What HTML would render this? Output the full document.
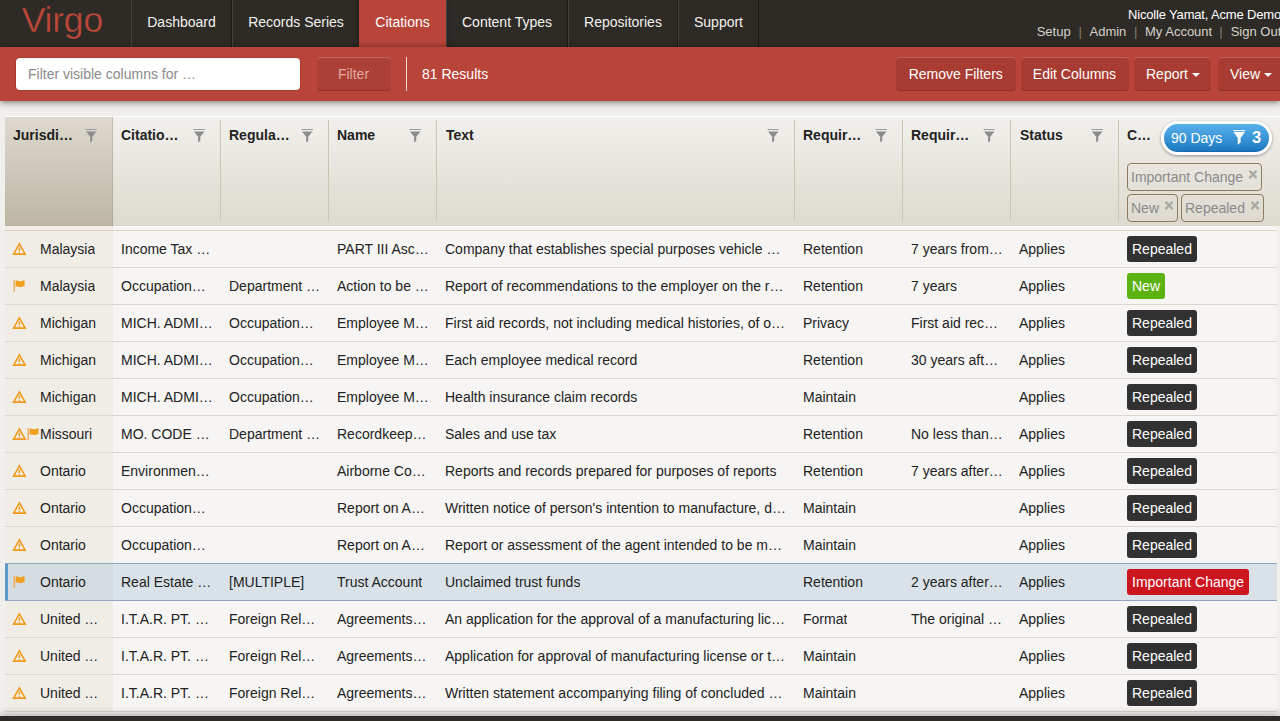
<!DOCTYPE html>
<html lang="en">
<head>
<meta charset="utf-8">
<title>Virgo - Citations</title>
<style>
*{box-sizing:border-box;margin:0;padding:0}
html,body{width:1280px;height:721px;overflow:hidden}
body{background:#f1efeb;font-family:"Liberation Sans",Arial,sans-serif;font-size:14px;color:#222;position:relative}
.abs{position:absolute}
/* top header */
#hdr{position:absolute;left:0;top:0;width:1280px;height:47px;background:#2e2b27}
#logo{position:absolute;left:21.7px;top:-3px;font-size:35.5px;line-height:46px;color:#bd4739;letter-spacing:-0.2px;-webkit-text-stroke:0.35px #2e2b27}
.nav{position:absolute;top:0;height:47px;line-height:44px;color:#f3f1ec;text-align:center;border-left:1px solid #45423d;border-right:1px solid #1c1a17;font-size:14px}
.nav.on{background:#b9453a;border-color:#b9453a;color:#fff;box-shadow:0 0 6px rgba(0,0,0,.35)}
#user{position:absolute;left:1128px;top:7px;white-space:nowrap;color:#fff;font-size:13px;line-height:15px;letter-spacing:-0.17px}
#links{position:absolute;left:0;top:24px;white-space:nowrap;color:#d6d2ca;font-size:13px;line-height:15px}
#links span,#links i{position:absolute;top:0}
#links i{font-style:normal;color:#857b68}
/* red bar */
#bar{position:absolute;left:0;top:47px;width:1280px;height:54px;background:#b9453a;box-shadow:0 1px 7px rgba(0,0,0,.55)}
#q{position:absolute;left:16px;top:11px;width:284px;height:32px;background:#fff;border-radius:4px;color:#8a8a8a;font-size:14px;line-height:32px;padding-left:12px;box-shadow:0 0 0 1px rgba(120,30,20,.25)}
.btn{position:absolute;top:10px;height:34px;line-height:34px;border-radius:4px;background:#a83c33;color:#fff;text-align:center;font-size:14px;box-shadow:inset 0 1px 0 rgba(255,255,255,.2),inset 0 -1px 0 rgba(0,0,0,.18)}
.btn.dis{color:#e0a9a2;background:#ad4036}
#vsep{position:absolute;left:406px;top:10px;width:1px;height:34px;background:#f0d9d5}
#res{position:absolute;left:422px;top:11px;line-height:32px;color:#fff}
.caret{display:inline-block;width:0;height:0;border-left:4px solid transparent;border-right:4px solid transparent;border-top:4px solid #fff;vertical-align:middle;margin-left:4px}
/* grid */
#grid{position:absolute;left:5px;top:116px;width:1272px;height:597px;background:#f6f5f3}
#gh{position:absolute;left:0;top:0;width:1275px;height:110px;border-top:1px solid #fff;background:linear-gradient(#f2f0ec,#dcd9cf)}
#gh .sorted{position:absolute;left:0;top:0;width:108px;height:109px;background:linear-gradient(#ddd9ce,#bdb6a5);border-right:1px solid rgba(140,130,110,.3)}
.th{position:absolute;top:9px;font-weight:bold;font-size:14px;line-height:18px;color:#222;white-space:nowrap}
.cs{position:absolute;top:3px;width:1px;height:101px;background:#cbc5b4}
.fi{position:absolute;top:12px;width:12.4px;height:14px}
#gap{position:absolute;left:0;top:110px;width:1272px;height:5px;border-bottom:1px solid #d9d4c8;background:#f6f5f3}
#gap b{position:absolute;left:0;top:0;width:108px;height:4px;background:#f0ede7}
#rows{position:absolute;left:0;top:115px;width:1272px}
.r{position:absolute;left:0;width:1272px;height:37px;border-bottom:1px solid #dcd8cf;background:#f6f5f3}
.r .c0{position:absolute;left:0;top:0;width:108px;height:36px;background:#f0ede7}
.r span{position:absolute;top:0;line-height:36px;white-space:nowrap;overflow:hidden;text-overflow:ellipsis;font-size:14px;color:#222}
.r.sel{background:#d9e2e8;border-bottom:1px solid #8ea5c4;box-shadow:0 -1px 0 #8ea5c4;z-index:2}
.r.sel .c0{background:#d5dcdf;border-left:3px solid #5b9bc8}
.tag{position:absolute;top:5px;height:26px;line-height:26px;border-radius:3px;color:#fff;padding:0 5px;font-size:14px;white-space:nowrap}
.rep{background:#313131}
.new{background:#5cb210}
.imp{background:#cd151f}
.ic{position:absolute;top:11px}
#pill{position:absolute;left:1156px;top:4px;width:111px;height:34px;border:3px solid #fff;border-radius:17px;background:linear-gradient(#58b0ea,#3e99da 45%,#1a76bd);color:#fff;font-size:14px;line-height:28px;box-shadow:0 1px 3px rgba(0,0,0,.4),inset 0 -1px 0 #1769aa}
#pill span{position:absolute;left:7px;top:0}
#pill b{position:absolute;left:88px;top:-1px;font-size:16.5px}
.chip{position:absolute;height:28px;border:1px solid #8b7d5b;border-radius:4px;color:#8a8a8a;font-size:14px;line-height:26px;padding-left:3px;white-space:nowrap}
.chip i{font-style:normal;font-weight:bold;position:absolute;right:3.5px;top:-2px;color:#a9a8a4;font-size:16px;-webkit-text-stroke:0.4px #a9a8a4}
#foot{position:absolute;left:0;top:716px;width:1280px;height:5px;background:#2e2b27;box-shadow:0 -1px 8px rgba(0,0,0,.4)}
</style>
</head>
<body>
<div id="hdr">
  <div id="logo">Virgo</div>
  <div class="nav" style="left:131px;width:101px">Dashboard</div>
  <div class="nav" style="left:232px;width:128px">Records Series</div>
  <div class="nav on" style="left:359.3px;width:86.5px">Citations</div>
  <div class="nav" style="left:446px;width:122px">Content Types</div>
  <div class="nav" style="left:568px;width:110px">Repositories</div>
  <div class="nav" style="left:678px;width:81px">Support</div>
  <div id="user">Nicolle Yamat, Acme Demo</div>
  <div id="links"><span style="left:1036.7px">Setup</span><i style="left:1078.4px">|</i><span style="left:1089.5px">Admin</span><i style="left:1134.1px">|</i><span style="left:1145px">My Account</span><i style="left:1219.3px">|</i><span style="left:1230.7px">Sign Out</span></div>
</div>
<div id="bar">
  <div id="q">Filter visible columns for …</div>
  <div class="btn dis" style="left:316.5px;width:74px">Filter</div>
  <div id="vsep"></div>
  <div id="res">81 Results</div>
  <div class="btn" style="left:896px;width:119.5px">Remove Filters</div>
  <div class="btn" style="left:1020.5px;width:108px">Edit Columns</div>
  <div class="btn" style="left:1133.5px;width:77px;padding-left:2px">Report<b class="caret"></b></div>
  <div class="btn" style="left:1217.5px;width:67px">View<b class="caret"></b></div>
</div>
<div id="grid">
  <div id="gh"><div class="sorted"></div><div class="th" style="left:8px">Jurisdi…</div><div class="th" style="left:116px">Citatio…</div><div class="th" style="left:224px">Regula…</div><div class="th" style="left:332px">Name</div><div class="th" style="left:441px">Text</div><div class="th" style="left:798px">Requir…</div><div class="th" style="left:906px">Requir…</div><div class="th" style="left:1015px">Status</div><div class="th" style="left:1122px">C…</div><div class="cs" style="left:215px"></div><div class="cs" style="left:323px"></div><div class="cs" style="left:431px"></div><div class="cs" style="left:789px"></div><div class="cs" style="left:897px"></div><div class="cs" style="left:1005px"></div><div class="cs" style="left:1113px"></div><svg class="fi" style="left:80px" viewBox="0 0 13 14" preserveAspectRatio="none"><path d="M0.5 0.5 H12.5" stroke="#9a9a9a" stroke-width="1" fill="none"/><path d="M1 2.5 H12 L7.6 7.8 V12 L5.4 13.5 V7.8 Z" fill="#8c8c8c"/></svg><svg class="fi" style="left:188px" viewBox="0 0 13 14" preserveAspectRatio="none"><path d="M0.5 0.5 H12.5" stroke="#9a9a9a" stroke-width="1" fill="none"/><path d="M1 2.5 H12 L7.6 7.8 V12 L5.4 13.5 V7.8 Z" fill="#8c8c8c"/></svg><svg class="fi" style="left:296px" viewBox="0 0 13 14" preserveAspectRatio="none"><path d="M0.5 0.5 H12.5" stroke="#9a9a9a" stroke-width="1" fill="none"/><path d="M1 2.5 H12 L7.6 7.8 V12 L5.4 13.5 V7.8 Z" fill="#8c8c8c"/></svg><svg class="fi" style="left:404px" viewBox="0 0 13 14" preserveAspectRatio="none"><path d="M0.5 0.5 H12.5" stroke="#9a9a9a" stroke-width="1" fill="none"/><path d="M1 2.5 H12 L7.6 7.8 V12 L5.4 13.5 V7.8 Z" fill="#8c8c8c"/></svg><svg class="fi" style="left:762px" viewBox="0 0 13 14" preserveAspectRatio="none"><path d="M0.5 0.5 H12.5" stroke="#9a9a9a" stroke-width="1" fill="none"/><path d="M1 2.5 H12 L7.6 7.8 V12 L5.4 13.5 V7.8 Z" fill="#8c8c8c"/></svg><svg class="fi" style="left:870px" viewBox="0 0 13 14" preserveAspectRatio="none"><path d="M0.5 0.5 H12.5" stroke="#9a9a9a" stroke-width="1" fill="none"/><path d="M1 2.5 H12 L7.6 7.8 V12 L5.4 13.5 V7.8 Z" fill="#8c8c8c"/></svg><svg class="fi" style="left:978px" viewBox="0 0 13 14" preserveAspectRatio="none"><path d="M0.5 0.5 H12.5" stroke="#9a9a9a" stroke-width="1" fill="none"/><path d="M1 2.5 H12 L7.6 7.8 V12 L5.4 13.5 V7.8 Z" fill="#8c8c8c"/></svg><svg class="fi" style="left:1086px" viewBox="0 0 13 14" preserveAspectRatio="none"><path d="M0.5 0.5 H12.5" stroke="#9a9a9a" stroke-width="1" fill="none"/><path d="M1 2.5 H12 L7.6 7.8 V12 L5.4 13.5 V7.8 Z" fill="#8c8c8c"/></svg><div id="pill"><span>90 Days</span><svg width="12.4" height="15" viewBox="0 0 13 15" preserveAspectRatio="none" style="position:absolute;left:68.6px;top:6px"><path d="M0.2 0.6 H12.8" stroke="#fff" stroke-width="1.1" fill="none"/><path d="M0.5 2.1 H12.5 L8 8.1 V12.4 L5 14.7 V8.1 Z" fill="#fff"/></svg><b>3</b></div>
<div class="chip" style="left:1122px;top:46px;width:135px">Important Change<i>×</i></div>
<div class="chip" style="left:1122px;top:77px;width:51px">New<i>×</i></div>
<div class="chip" style="left:1176px;top:77px;width:83px">Repealed<i>×</i></div></div>
  <div id="gap"><b></b></div>
  <div id="rows"><div class="r" style="top:0px"><div class="c0"></div><svg class="ic" style="left:7px" width="15" height="14" viewBox="0 0 15 14"><path d="M7.4 1.9 L13.2 12.1 H1.6 Z" fill="none" stroke="#f09a1a" stroke-width="1.6" stroke-linejoin="miter"/><path d="M7.4 5.6 V9 M7.4 9.9 V11" stroke="#f09a1a" stroke-width="1.5" fill="none"/></svg><span style="left:35px">Malaysia</span><span style="left:116px">Income Tax …</span><span style="left:332px">PART III Asc…</span><span style="left:440px">Company that establishes special purposes vehicle …</span><span style="left:798px">Retention</span><span style="left:906px">7 years from…</span><span style="left:1014px">Applies</span><div class="tag rep" style="left:1122px">Repealed</div></div>
<div class="r" style="top:37px"><div class="c0"></div><svg class="ic" style="left:8px" width="13" height="14" viewBox="0 0 13 14"><path d="M1.2 1 V13" stroke="#f0a040" stroke-width="1.2" fill="none"/><path d="M2.6 1.8 C4.6 0.8 6.2 2.6 8 2.2 C9.4 1.9 10.6 1.2 11.6 1.4 V7.2 C10.4 7 9.4 7.8 8 8 C6.2 8.4 4.6 6.8 2.6 7.8 Z" fill="#f0a020"/></svg><span style="left:35px">Malaysia</span><span style="left:116px">Occupation…</span><span style="left:224px">Department …</span><span style="left:332px">Action to be …</span><span style="left:440px">Report of recommendations to the employer on the r…</span><span style="left:798px">Retention</span><span style="left:906px">7 years</span><span style="left:1014px">Applies</span><div class="tag new" style="left:1122px">New</div></div>
<div class="r" style="top:74px"><div class="c0"></div><svg class="ic" style="left:7px" width="15" height="14" viewBox="0 0 15 14"><path d="M7.4 1.9 L13.2 12.1 H1.6 Z" fill="none" stroke="#f09a1a" stroke-width="1.6" stroke-linejoin="miter"/><path d="M7.4 5.6 V9 M7.4 9.9 V11" stroke="#f09a1a" stroke-width="1.5" fill="none"/></svg><span style="left:35px">Michigan</span><span style="left:116px">MICH. ADMI…</span><span style="left:224px">Occupation…</span><span style="left:332px">Employee M…</span><span style="left:440px">First aid records, not including medical histories, of o…</span><span style="left:798px">Privacy</span><span style="left:906px">First aid rec…</span><span style="left:1014px">Applies</span><div class="tag rep" style="left:1122px">Repealed</div></div>
<div class="r" style="top:111px"><div class="c0"></div><svg class="ic" style="left:7px" width="15" height="14" viewBox="0 0 15 14"><path d="M7.4 1.9 L13.2 12.1 H1.6 Z" fill="none" stroke="#f09a1a" stroke-width="1.6" stroke-linejoin="miter"/><path d="M7.4 5.6 V9 M7.4 9.9 V11" stroke="#f09a1a" stroke-width="1.5" fill="none"/></svg><span style="left:35px">Michigan</span><span style="left:116px">MICH. ADMI…</span><span style="left:224px">Occupation…</span><span style="left:332px">Employee M…</span><span style="left:440px">Each employee medical record</span><span style="left:798px">Retention</span><span style="left:906px">30 years aft…</span><span style="left:1014px">Applies</span><div class="tag rep" style="left:1122px">Repealed</div></div>
<div class="r" style="top:148px"><div class="c0"></div><svg class="ic" style="left:7px" width="15" height="14" viewBox="0 0 15 14"><path d="M7.4 1.9 L13.2 12.1 H1.6 Z" fill="none" stroke="#f09a1a" stroke-width="1.6" stroke-linejoin="miter"/><path d="M7.4 5.6 V9 M7.4 9.9 V11" stroke="#f09a1a" stroke-width="1.5" fill="none"/></svg><span style="left:35px">Michigan</span><span style="left:116px">MICH. ADMI…</span><span style="left:224px">Occupation…</span><span style="left:332px">Employee M…</span><span style="left:440px">Health insurance claim records</span><span style="left:798px">Maintain</span><span style="left:1014px">Applies</span><div class="tag rep" style="left:1122px">Repealed</div></div>
<div class="r" style="top:185px"><div class="c0"></div><svg class="ic" style="left:7px" width="15" height="14" viewBox="0 0 15 14"><path d="M7.4 1.9 L13.2 12.1 H1.6 Z" fill="none" stroke="#f09a1a" stroke-width="1.6" stroke-linejoin="miter"/><path d="M7.4 5.6 V9 M7.4 9.9 V11" stroke="#f09a1a" stroke-width="1.5" fill="none"/></svg><svg class="ic" style="left:21.7px" width="13" height="14" viewBox="0 0 13 14"><path d="M1.2 1 V13" stroke="#f0a040" stroke-width="1.2" fill="none"/><path d="M2.6 1.8 C4.6 0.8 6.2 2.6 8 2.2 C9.4 1.9 10.6 1.2 11.6 1.4 V7.2 C10.4 7 9.4 7.8 8 8 C6.2 8.4 4.6 6.8 2.6 7.8 Z" fill="#f0a020"/></svg><span style="left:35px">Missouri</span><span style="left:116px">MO. CODE …</span><span style="left:224px">Department …</span><span style="left:332px">Recordkeep…</span><span style="left:440px">Sales and use tax</span><span style="left:798px">Retention</span><span style="left:906px">No less than…</span><span style="left:1014px">Applies</span><div class="tag rep" style="left:1122px">Repealed</div></div>
<div class="r" style="top:222px"><div class="c0"></div><svg class="ic" style="left:7px" width="15" height="14" viewBox="0 0 15 14"><path d="M7.4 1.9 L13.2 12.1 H1.6 Z" fill="none" stroke="#f09a1a" stroke-width="1.6" stroke-linejoin="miter"/><path d="M7.4 5.6 V9 M7.4 9.9 V11" stroke="#f09a1a" stroke-width="1.5" fill="none"/></svg><span style="left:35px">Ontario</span><span style="left:116px">Environmen…</span><span style="left:332px">Airborne Co…</span><span style="left:440px">Reports and records prepared for purposes of reports</span><span style="left:798px">Retention</span><span style="left:906px">7 years after…</span><span style="left:1014px">Applies</span><div class="tag rep" style="left:1122px">Repealed</div></div>
<div class="r" style="top:259px"><div class="c0"></div><svg class="ic" style="left:7px" width="15" height="14" viewBox="0 0 15 14"><path d="M7.4 1.9 L13.2 12.1 H1.6 Z" fill="none" stroke="#f09a1a" stroke-width="1.6" stroke-linejoin="miter"/><path d="M7.4 5.6 V9 M7.4 9.9 V11" stroke="#f09a1a" stroke-width="1.5" fill="none"/></svg><span style="left:35px">Ontario</span><span style="left:116px">Occupation…</span><span style="left:332px">Report on A…</span><span style="left:440px">Written notice of person's intention to manufacture, d…</span><span style="left:798px">Maintain</span><span style="left:1014px">Applies</span><div class="tag rep" style="left:1122px">Repealed</div></div>
<div class="r" style="top:296px"><div class="c0"></div><svg class="ic" style="left:7px" width="15" height="14" viewBox="0 0 15 14"><path d="M7.4 1.9 L13.2 12.1 H1.6 Z" fill="none" stroke="#f09a1a" stroke-width="1.6" stroke-linejoin="miter"/><path d="M7.4 5.6 V9 M7.4 9.9 V11" stroke="#f09a1a" stroke-width="1.5" fill="none"/></svg><span style="left:35px">Ontario</span><span style="left:116px">Occupation…</span><span style="left:332px">Report on A…</span><span style="left:440px">Report or assessment of the agent intended to be m…</span><span style="left:798px">Maintain</span><span style="left:1014px">Applies</span><div class="tag rep" style="left:1122px">Repealed</div></div>
<div class="r sel" style="top:333px"><div class="c0"></div><svg class="ic" style="left:8px" width="13" height="14" viewBox="0 0 13 14"><path d="M1.2 1 V13" stroke="#f0a040" stroke-width="1.2" fill="none"/><path d="M2.6 1.8 C4.6 0.8 6.2 2.6 8 2.2 C9.4 1.9 10.6 1.2 11.6 1.4 V7.2 C10.4 7 9.4 7.8 8 8 C6.2 8.4 4.6 6.8 2.6 7.8 Z" fill="#f0a020"/></svg><span style="left:35px">Ontario</span><span style="left:116px">Real Estate …</span><span style="left:224px">[MULTIPLE]</span><span style="left:332px">Trust Account</span><span style="left:440px">Unclaimed trust funds</span><span style="left:798px">Retention</span><span style="left:906px">2 years after…</span><span style="left:1014px">Applies</span><div class="tag imp" style="left:1122px">Important Change</div></div>
<div class="r" style="top:370px"><div class="c0"></div><svg class="ic" style="left:7px" width="15" height="14" viewBox="0 0 15 14"><path d="M7.4 1.9 L13.2 12.1 H1.6 Z" fill="none" stroke="#f09a1a" stroke-width="1.6" stroke-linejoin="miter"/><path d="M7.4 5.6 V9 M7.4 9.9 V11" stroke="#f09a1a" stroke-width="1.5" fill="none"/></svg><span style="left:35px">United …</span><span style="left:116px">I.T.A.R. PT. …</span><span style="left:224px">Foreign Rel…</span><span style="left:332px">Agreements…</span><span style="left:440px">An application for the approval of a manufacturing lic…</span><span style="left:798px">Format</span><span style="left:906px">The original …</span><span style="left:1014px">Applies</span><div class="tag rep" style="left:1122px">Repealed</div></div>
<div class="r" style="top:407px"><div class="c0"></div><svg class="ic" style="left:7px" width="15" height="14" viewBox="0 0 15 14"><path d="M7.4 1.9 L13.2 12.1 H1.6 Z" fill="none" stroke="#f09a1a" stroke-width="1.6" stroke-linejoin="miter"/><path d="M7.4 5.6 V9 M7.4 9.9 V11" stroke="#f09a1a" stroke-width="1.5" fill="none"/></svg><span style="left:35px">United …</span><span style="left:116px">I.T.A.R. PT. …</span><span style="left:224px">Foreign Rel…</span><span style="left:332px">Agreements…</span><span style="left:440px">Application for approval of manufacturing license or t…</span><span style="left:798px">Maintain</span><span style="left:1014px">Applies</span><div class="tag rep" style="left:1122px">Repealed</div></div>
<div class="r" style="top:444px"><div class="c0"></div><svg class="ic" style="left:7px" width="15" height="14" viewBox="0 0 15 14"><path d="M7.4 1.9 L13.2 12.1 H1.6 Z" fill="none" stroke="#f09a1a" stroke-width="1.6" stroke-linejoin="miter"/><path d="M7.4 5.6 V9 M7.4 9.9 V11" stroke="#f09a1a" stroke-width="1.5" fill="none"/></svg><span style="left:35px">United …</span><span style="left:116px">I.T.A.R. PT. …</span><span style="left:224px">Foreign Rel…</span><span style="left:332px">Agreements…</span><span style="left:440px">Written statement accompanying filing of concluded …</span><span style="left:798px">Maintain</span><span style="left:1014px">Applies</span><div class="tag rep" style="left:1122px">Repealed</div></div></div>
</div>
<div id="foot"></div>
</body>
</html>
